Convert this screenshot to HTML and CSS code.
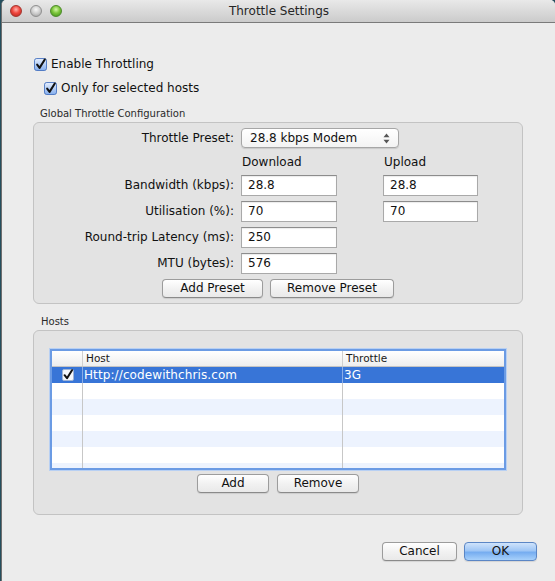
FILE: index.html
```html
<!DOCTYPE html>
<html>
<head>
<meta charset="utf-8">
<title>Throttle Settings</title>
<link rel="stylesheet" href="styles.css">
</head>
<body>
<div class="window">
  <div class="titlebar">
    <div class="lights">
      <span class="light red"></span>
      <span class="light grey"></span>
      <span class="light green"></span>
    </div>
    <div class="title">Throttle Settings</div>
    <div></div>
  </div>

  <div class="content">
    <label class="check-row">
      <svg class="cb" viewBox="0 0 14 14" width="13" height="13"><defs><linearGradient id="cbg" x1="0" y1="0" x2="0" y2="1"><stop offset="0" stop-color="#e6effd"/><stop offset="1" stop-color="#84aeee"/></linearGradient></defs><rect x="0.5" y="0.5" width="13" height="13" rx="2.5" fill="url(#cbg)" stroke="#4673c0"/><path d="M3.4 7.2 L6 10.6 L11.6 1.6" fill="none" stroke="#111" stroke-width="2.2" stroke-linecap="round" stroke-linejoin="round"/></svg>
      <span>Enable Throttling</span>
    </label>
    <label class="check-row indent">
      <svg class="cb" viewBox="0 0 14 14" width="13" height="13"><rect x="0.5" y="0.5" width="13" height="13" rx="2.5" fill="url(#cbg)" stroke="#4673c0"/><path d="M3.4 7.2 L6 10.6 L11.6 1.6" fill="none" stroke="#111" stroke-width="2.2" stroke-linecap="round" stroke-linejoin="round"/></svg>
      <span>Only for selected hosts</span>
    </label>

    <div class="group-label first">Global Throttle Configuration</div>
    <div class="group config-group">
      <div class="config-grid">
        <div class="lbl">Throttle Preset:</div>
        <div class="select">
          <span>28.8 kbps Modem</span>
          <svg viewBox="0 0 7 11" width="7" height="11"><path d="M3.5 0.5 L6.5 4.2 H0.5 Z" fill="#555"/><path d="M3.5 10.5 L6.5 6.8 H0.5 Z" fill="#555"/></svg>
        </div>

        <div class="colhead col2">Download</div>
        <div class="colhead col4">Upload</div>

        <div class="lbl">Bandwidth (kbps):</div>
        <div class="input col2">28.8</div>
        <div class="input col4">28.8</div>

        <div class="lbl">Utilisation (%):</div>
        <div class="input col2">70</div>
        <div class="input col4">70</div>

        <div class="lbl">Round-trip Latency (ms):</div>
        <div class="input col2">250</div>

        <div class="lbl">MTU (bytes):</div>
        <div class="input col2">576</div>
      </div>
      <div class="btn-row">
        <button class="btn w-addpreset">Add Preset</button>
        <button class="btn w-rempreset">Remove Preset</button>
      </div>
    </div>

    <div class="group-label second">Hosts</div>
    <div class="group hosts-group">
      <div class="table">
        <div class="trow thead">
          <div class="cell"></div>
          <div class="cell">Host</div>
          <div class="cell">Throttle</div>
        </div>
        <div class="trow selected">
          <div class="cell chk">
            <svg viewBox="0 0 12 12" width="12" height="12"><rect x="0.5" y="0.5" width="11" height="11" rx="1.5" fill="#f4f7fc" stroke="#9fb4d6"/><path d="M2.6 6.2 L5 9.2 L10 1.2" fill="none" stroke="#111" stroke-width="2" stroke-linecap="round" stroke-linejoin="round"/></svg>
          </div>
          <div class="cell">Http://codewithchris.com</div>
          <div class="cell">3G</div>
        </div>
        <div class="trow"><div class="cell"></div><div class="cell"></div><div class="cell"></div></div>
        <div class="trow alt"><div class="cell"></div><div class="cell"></div><div class="cell"></div></div>
        <div class="trow"><div class="cell"></div><div class="cell"></div><div class="cell"></div></div>
        <div class="trow alt"><div class="cell"></div><div class="cell"></div><div class="cell"></div></div>
        <div class="trow"><div class="cell"></div><div class="cell"></div><div class="cell"></div></div>
        <div class="trow alt"><div class="cell"></div><div class="cell"></div><div class="cell"></div></div>
      </div>
      <div class="btn-row hosts-btns">
        <button class="btn w-add">Add</button>
        <button class="btn w-remove">Remove</button>
      </div>
    </div>
  </div>

  <div class="footer">
    <button class="btn w-cancel">Cancel</button>
    <button class="btn primary w-ok">OK</button>
  </div>
</div>
</body>
</html>
```

FILE: styles.css
```css
html, body {
  margin: 0;
  padding: 0;
}
body {
  background: #254f5e;
  font-family: "DejaVu Sans", "Liberation Sans", sans-serif;
  font-size: 12px;
  color: #111;
  width: 555px;
  height: 581px;
  overflow: hidden;
}
.window {
  margin-left: 1px;
  height: 581px;
  background: #ececec;
  border-left: 1px solid #6e6e6e;
  border-radius: 5px 5px 0 0;
  overflow: hidden;
}
.titlebar {
  height: 22px;
  display: grid;
  grid-template-columns: 1fr auto 1fr;
  align-items: center;
  background: linear-gradient(#e9e9e9, #cbcbcb);
  border-bottom: 1px solid #7a7a7a;
}
.lights {
  display: flex;
  gap: 8px;
  padding-left: 8px;
  align-items: center;
}
.light {
  width: 12px;
  height: 12px;
  border-radius: 50%;
  box-sizing: border-box;
}
.light.red {
  background: radial-gradient(circle at 50% 35%, #ffb3ad 0, #f0483f 45%, #b1231c 100%);
  border: 1px solid #a4342d;
}
.light.grey {
  background: radial-gradient(circle at 50% 35%, #f7f7f7 0, #cdcdcd 50%, #999 100%);
  border: 1px solid #8f8f8f;
}
.light.green {
  background: radial-gradient(circle at 50% 35%, #d5f7a8 0, #7cc63a 45%, #3b8a18 100%);
  border: 1px solid #4b8a28;
}
.title {
  font-size: 12px;
  color: #262626;
  padding-left: 1px;
}

.content {
  padding: 33px 32px 0 31px;
}
.check-row {
  display: flex;
  align-items: center;
  gap: 4px;
  height: 16px;
  padding-left: 1px;
}
.check-row.indent {
  margin-left: 10px;
  margin-top: 8px;
}
.cb {
  display: block;
  flex: none;
}

.group-label {
  font-size: 10px;
  line-height: 13px;
  color: #2a2a2a;
  margin-left: 7px;
  margin-bottom: 2px;
}
.group-label.first {
  margin-top: 11px;
}
.group-label.second {
  margin-top: 11px;
  margin-left: 8px;
}
.group {
  border: 1px solid #c3c3c3;
  border-radius: 6px;
  background: #e3e3e3;
}
.config-group {
  padding: 5px 0;
}
.config-grid {
  display: grid;
  grid-template-columns: 207px 96px 46px 95px;
  row-gap: 5px;
}
.lbl {
  grid-column: 1;
  text-align: right;
  padding-right: 7px;
  line-height: 21px;
  white-space: nowrap;
}
.col2 { grid-column: 2; }
.col4 { grid-column: 4; }
.select {
  grid-column: 2 / span 3;
  width: 158px;
  height: 20px;
  box-sizing: border-box;
  background: linear-gradient(#ffffff, #f3f3f3);
  border: 1px solid #a6a6a6;
  border-radius: 4px;
  box-shadow: 0 1px 1px rgba(0,0,0,0.12);
  display: flex;
  align-items: center;
  justify-content: space-between;
  padding: 0 8px 0 8px;
}
.colhead {
  line-height: 16px;
  padding-left: 1px;
}
.input {
  height: 21px;
  box-sizing: border-box;
  background: #fff;
  border: 1px solid #a9a9a9;
  border-top-color: #8c8c8c;
  box-shadow: inset 0 1px 1px rgba(0,0,0,0.08);
  padding-left: 6px;
  line-height: 19px;
}
.btn-row {
  display: flex;
  justify-content: center;
  gap: 7px;
  margin-top: 5px;
}
.btn {
  font-family: inherit;
  font-size: 12px;
  color: #111;
  height: 19px;
  padding: 0;
  box-sizing: border-box;
  border: 1px solid #9c9c9c;
  border-bottom-color: #8a8a8a;
  border-radius: 4px;
  background: linear-gradient(#ffffff, #f1f1f1 55%, #e9e9e9);
  box-shadow: 0 1px 1px rgba(0,0,0,0.1);
  line-height: 17px;
}
.w-addpreset { width: 101px; }
.w-rempreset { width: 124px; }
.w-add { width: 72px; }
.w-remove { width: 82px; }
.w-cancel { width: 75px; }
.w-ok { width: 73px; }
.btn.primary {
  background: linear-gradient(#cfe3fb, #9fc6f5 45%, #76adf0 55%, #a7d0fb);
  border-color: #5b86c5;
}

.hosts-group {
  padding: 18px 16px 21px;
}
.table {
  height: 117px;
  border: 2px solid #6b9be4;
  box-shadow: 0 0 0 1px #b8d0f3;
  background: #fff;
  overflow: hidden;
}
.trow {
  display: grid;
  grid-template-columns: 30px 260px 1fr;
  height: 16px;
  line-height: 16px;
  box-sizing: border-box;
}
.trow .cell + .cell {
  border-left: 1px solid #c7c7c7;
  padding-left: 1px;
}
.thead {
  background: linear-gradient(#ffffff, #eeeeee);
  border-bottom: 1px solid #c4c4c4;
  font-size: 10.5px;
  line-height: 15px;
  color: #1a1a1a;
}
.thead .cell + .cell {
  padding-left: 3px;
  border-left-color: #d0d0d0;
}
.trow.selected {
  background: #3875d7;
  color: #fff;
  letter-spacing: 0.1px;
}
.trow.selected .cell + .cell {
  border-left-color: #8aaee8;
}
.trow.alt {
  background: #edf3fe;
}
.cell.chk {
  display: flex;
  align-items: center;
  justify-content: center;
  padding-left: 1px;
}
.hosts-btns {
  margin-top: 4px;
  gap: 8px;
}

.footer {
  display: flex;
  justify-content: flex-end;
  gap: 7px;
  padding: 27px 18px 0 0;
}
```
